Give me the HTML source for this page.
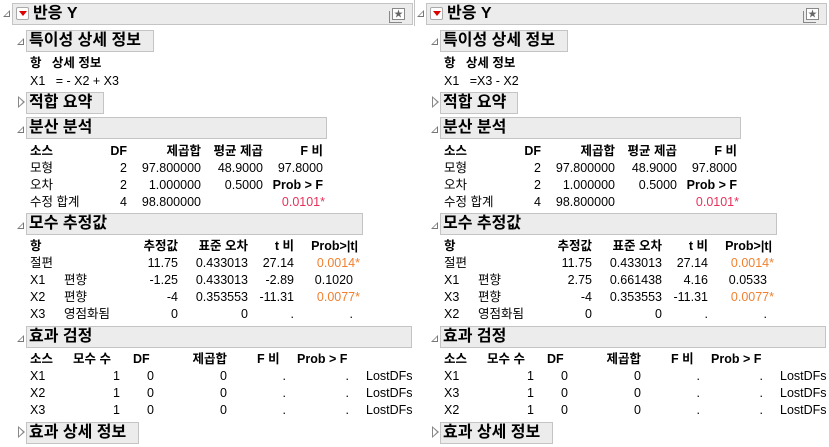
<!DOCTYPE html>
<html><head><meta charset="utf-8"><style>
*{margin:0;padding:0;box-sizing:border-box}
body{width:829px;height:447px;background:#fff;position:relative;overflow:hidden;font-family:"Liberation Sans","Noto Sans CJK KR",sans-serif;font-size:12.5px;color:#000}
.p{position:absolute;top:0;width:415px;height:447px}
.a{position:absolute;white-space:nowrap;line-height:16px}
.r{text-align:right}
.b{font-weight:bold}
.box{position:absolute;background:#ececec;border:1px solid #c4c4c4;font-weight:bold;font-size:16px;line-height:19px;padding-left:2px}
.tri{position:absolute;width:0;height:0}
.dn{border-left:7px solid transparent;border-bottom:7px solid #777}
.dn:after{content:"";position:absolute;left:-5px;top:2px;border-left:4px solid transparent;border-bottom:4px solid #fff}
.rt{border-top:6px solid transparent;border-bottom:6px solid transparent;border-left:7px solid #888}
.rt:after{content:"";position:absolute;left:-6px;top:-4px;border-top:4px solid transparent;border-bottom:4px solid transparent;border-left:4px solid #fff}
.red{color:#e8305a}.or{color:#f08030}
</style></head><body>

<div class="p" style="left:0">
<div class="tri dn" style="left:3px;top:10px"></div>
<div class="box" style="left:12px;top:3px;width:401px;height:22px;padding-left:20px">반응 Y</div>
<div style="position:absolute;left:16px;top:7px;width:13px;height:13px;border:1px solid #aaa;border-radius:2px;background:#fff"><div style="position:absolute;left:2px;top:3px;border-left:4px solid transparent;border-right:4px solid transparent;border-top:5px solid #d00"></div></div>
<div style="position:absolute;left:392px;top:8px;width:13px;height:12px;border:1px solid #888;background:#fff;font-size:9px;line-height:10px;text-align:center;color:#666">★</div>
<div style="position:absolute;left:389px;top:11px;width:13px;height:12px;border-left:1px solid #888;border-bottom:1px solid #888"></div>

<div class="tri dn" style="left:17px;top:38px"></div>
<div class="box" style="left:26px;top:30px;width:128px;height:22px">특이성 상세 정보</div>
<div class="a b" style="left:30px;top:55px">항&nbsp;&nbsp;&nbsp;상세 정보</div>
<div class="a" style="left:30px;top:73px">X1&nbsp;&nbsp;&nbsp;= - X2 + X3</div>

<div class="tri rt" style="left:18px;top:96px"></div>
<div class="box" style="left:26px;top:92px;width:78px;height:22px">적합 요약</div>

<div class="tri dn" style="left:17px;top:126px"></div>
<div class="box" style="left:26px;top:117px;width:301px;height:22px">분산 분석</div>
<div class="a b" style="left:30px;top:143px">소스</div>
<div class="a b r" style="left:77px;width:50px;top:143px">DF</div>
<div class="a b r" style="left:131px;width:70px;top:143px">제곱합</div>
<div class="a b r" style="left:193px;width:70px;top:143px">평균 제곱</div>
<div class="a b r" style="left:253px;width:70px;top:143px">F 비</div>
<div class="a" style="left:30px;top:160px">모형</div><div class="a r" style="left:77px;width:50px;top:160px">2</div><div class="a r" style="left:131px;width:70px;top:160px">97.800000</div><div class="a r" style="left:193px;width:70px;top:160px">48.9000</div><div class="a r" style="left:253px;width:70px;top:160px">97.8000</div>
<div class="a" style="left:30px;top:177px">오차</div><div class="a r" style="left:77px;width:50px;top:177px">2</div><div class="a r" style="left:131px;width:70px;top:177px">1.000000</div><div class="a r" style="left:193px;width:70px;top:177px">0.5000</div><div class="a r b" style="left:253px;width:70px;top:177px">Prob &gt; F</div>
<div class="a" style="left:30px;top:194px">수정 합계</div><div class="a r" style="left:77px;width:50px;top:194px">4</div><div class="a r" style="left:131px;width:70px;top:194px">98.800000</div><div class="a r red" style="left:253px;width:72px;top:194px">0.0101*</div>

<div class="tri dn" style="left:17px;top:222px"></div>
<div class="box" style="left:26px;top:213px;width:337px;height:22px">모수 추정값</div>
<div class="a b" style="left:30px;top:238px">항</div>
<div class="a b r" style="left:108px;width:70px;top:238px">추정값</div>
<div class="a b r" style="left:168px;width:80px;top:238px">표준 오차</div>
<div class="a b r" style="left:234px;width:60px;top:238px">t 비</div>
<div class="a b r" style="left:288px;width:70px;top:238px">Prob&gt;|t|</div>
<div class="a" style="left:30px;top:255px">절편</div><div class="a r" style="left:108px;width:70px;top:255px">11.75</div><div class="a r" style="left:168px;width:80px;top:255px">0.433013</div><div class="a r" style="left:234px;width:60px;top:255px">27.14</div><div class="a r or" style="left:288px;width:72px;top:255px">0.0014*</div>
<div class="a" style="left:30px;top:272px">X1</div><div class="a" style="left:64px;top:272px">편향</div><div class="a r" style="left:108px;width:70px;top:272px">-1.25</div><div class="a r" style="left:168px;width:80px;top:272px">0.433013</div><div class="a r" style="left:234px;width:60px;top:272px">-2.89</div><div class="a r" style="left:283px;width:70px;top:272px">0.1020</div>
<div class="a" style="left:30px;top:289px">X2</div><div class="a" style="left:64px;top:289px">편향</div><div class="a r" style="left:108px;width:70px;top:289px">-4</div><div class="a r" style="left:168px;width:80px;top:289px">0.353553</div><div class="a r" style="left:234px;width:60px;top:289px">-11.31</div><div class="a r or" style="left:288px;width:72px;top:289px">0.0077*</div>
<div class="a" style="left:30px;top:306px">X3</div><div class="a" style="left:64px;top:306px">영점화됨</div><div class="a r" style="left:108px;width:70px;top:306px">0</div><div class="a r" style="left:168px;width:80px;top:306px">0</div><div class="a r" style="left:234px;width:60px;top:306px">.</div><div class="a r" style="left:283px;width:70px;top:306px">.</div>

<div class="tri dn" style="left:17px;top:335px"></div>
<div class="box" style="left:26px;top:326px;width:386px;height:22px">효과 검정</div>
<div class="a b" style="left:30px;top:351px">소스</div><div class="a b" style="left:73px;top:351px">모수 수</div><div class="a b" style="left:133px;top:351px">DF</div><div class="a b r" style="left:157px;width:70px;top:351px">제곱합</div><div class="a b" style="left:257px;top:351px">F 비</div><div class="a b" style="left:297px;top:351px">Prob &gt; F</div>
<div class="a" style="left:30px;top:368px">X1</div><div class="a r" style="left:70px;width:50px;top:368px">1</div><div class="a r" style="left:134px;width:20px;top:368px">0</div><div class="a r" style="left:157px;width:70px;top:368px">0</div><div class="a r" style="left:256px;width:30px;top:368px">.</div><div class="a r" style="left:319px;width:30px;top:368px">.</div><div class="a" style="left:366px;top:368px">LostDFs</div>
<div class="a" style="left:30px;top:385px">X2</div><div class="a r" style="left:70px;width:50px;top:385px">1</div><div class="a r" style="left:134px;width:20px;top:385px">0</div><div class="a r" style="left:157px;width:70px;top:385px">0</div><div class="a r" style="left:256px;width:30px;top:385px">.</div><div class="a r" style="left:319px;width:30px;top:385px">.</div><div class="a" style="left:366px;top:385px">LostDFs</div>
<div class="a" style="left:30px;top:402px">X3</div><div class="a r" style="left:70px;width:50px;top:402px">1</div><div class="a r" style="left:134px;width:20px;top:402px">0</div><div class="a r" style="left:157px;width:70px;top:402px">0</div><div class="a r" style="left:256px;width:30px;top:402px">.</div><div class="a r" style="left:319px;width:30px;top:402px">.</div><div class="a" style="left:366px;top:402px">LostDFs</div>

<div class="tri rt" style="left:18px;top:426px"></div>
<div class="box" style="left:26px;top:422px;width:113px;height:22px">효과 상세 정보</div>
</div>

<div style="position:absolute;left:414px;top:0;width:1px;height:26px;background:#c4c4c4"></div>

<div class="p" style="left:414px">
<div class="tri dn" style="left:3px;top:10px"></div>
<div class="box" style="left:12px;top:3px;width:401px;height:22px;padding-left:20px">반응 Y</div>
<div style="position:absolute;left:16px;top:7px;width:13px;height:13px;border:1px solid #aaa;border-radius:2px;background:#fff"><div style="position:absolute;left:2px;top:3px;border-left:4px solid transparent;border-right:4px solid transparent;border-top:5px solid #d00"></div></div>
<div style="position:absolute;left:392px;top:8px;width:13px;height:12px;border:1px solid #888;background:#fff;font-size:9px;line-height:10px;text-align:center;color:#666">★</div>
<div style="position:absolute;left:389px;top:11px;width:13px;height:12px;border-left:1px solid #888;border-bottom:1px solid #888"></div>

<div class="tri dn" style="left:17px;top:38px"></div>
<div class="box" style="left:26px;top:30px;width:128px;height:22px">특이성 상세 정보</div>
<div class="a b" style="left:30px;top:55px">항&nbsp;&nbsp;&nbsp;상세 정보</div>
<div class="a" style="left:30px;top:73px">X1&nbsp;&nbsp;&nbsp;=X3 - X2</div>

<div class="tri rt" style="left:18px;top:96px"></div>
<div class="box" style="left:26px;top:92px;width:78px;height:22px">적합 요약</div>

<div class="tri dn" style="left:17px;top:126px"></div>
<div class="box" style="left:26px;top:117px;width:301px;height:22px">분산 분석</div>
<div class="a b" style="left:30px;top:143px">소스</div>
<div class="a b r" style="left:77px;width:50px;top:143px">DF</div>
<div class="a b r" style="left:131px;width:70px;top:143px">제곱합</div>
<div class="a b r" style="left:193px;width:70px;top:143px">평균 제곱</div>
<div class="a b r" style="left:253px;width:70px;top:143px">F 비</div>
<div class="a" style="left:30px;top:160px">모형</div><div class="a r" style="left:77px;width:50px;top:160px">2</div><div class="a r" style="left:131px;width:70px;top:160px">97.800000</div><div class="a r" style="left:193px;width:70px;top:160px">48.9000</div><div class="a r" style="left:253px;width:70px;top:160px">97.8000</div>
<div class="a" style="left:30px;top:177px">오차</div><div class="a r" style="left:77px;width:50px;top:177px">2</div><div class="a r" style="left:131px;width:70px;top:177px">1.000000</div><div class="a r" style="left:193px;width:70px;top:177px">0.5000</div><div class="a r b" style="left:253px;width:70px;top:177px">Prob &gt; F</div>
<div class="a" style="left:30px;top:194px">수정 합계</div><div class="a r" style="left:77px;width:50px;top:194px">4</div><div class="a r" style="left:131px;width:70px;top:194px">98.800000</div><div class="a r red" style="left:253px;width:72px;top:194px">0.0101*</div>

<div class="tri dn" style="left:17px;top:222px"></div>
<div class="box" style="left:26px;top:213px;width:337px;height:22px">모수 추정값</div>
<div class="a b" style="left:30px;top:238px">항</div>
<div class="a b r" style="left:108px;width:70px;top:238px">추정값</div>
<div class="a b r" style="left:168px;width:80px;top:238px">표준 오차</div>
<div class="a b r" style="left:234px;width:60px;top:238px">t 비</div>
<div class="a b r" style="left:288px;width:70px;top:238px">Prob&gt;|t|</div>
<div class="a" style="left:30px;top:255px">절편</div><div class="a r" style="left:108px;width:70px;top:255px">11.75</div><div class="a r" style="left:168px;width:80px;top:255px">0.433013</div><div class="a r" style="left:234px;width:60px;top:255px">27.14</div><div class="a r or" style="left:288px;width:72px;top:255px">0.0014*</div>
<div class="a" style="left:30px;top:272px">X1</div><div class="a" style="left:64px;top:272px">편향</div><div class="a r" style="left:108px;width:70px;top:272px">2.75</div><div class="a r" style="left:168px;width:80px;top:272px">0.661438</div><div class="a r" style="left:234px;width:60px;top:272px">4.16</div><div class="a r" style="left:283px;width:70px;top:272px">0.0533</div>
<div class="a" style="left:30px;top:289px">X3</div><div class="a" style="left:64px;top:289px">편향</div><div class="a r" style="left:108px;width:70px;top:289px">-4</div><div class="a r" style="left:168px;width:80px;top:289px">0.353553</div><div class="a r" style="left:234px;width:60px;top:289px">-11.31</div><div class="a r or" style="left:288px;width:72px;top:289px">0.0077*</div>
<div class="a" style="left:30px;top:306px">X2</div><div class="a" style="left:64px;top:306px">영점화됨</div><div class="a r" style="left:108px;width:70px;top:306px">0</div><div class="a r" style="left:168px;width:80px;top:306px">0</div><div class="a r" style="left:234px;width:60px;top:306px">.</div><div class="a r" style="left:283px;width:70px;top:306px">.</div>

<div class="tri dn" style="left:17px;top:335px"></div>
<div class="box" style="left:26px;top:326px;width:386px;height:22px">효과 검정</div>
<div class="a b" style="left:30px;top:351px">소스</div><div class="a b" style="left:73px;top:351px">모수 수</div><div class="a b" style="left:133px;top:351px">DF</div><div class="a b r" style="left:157px;width:70px;top:351px">제곱합</div><div class="a b" style="left:257px;top:351px">F 비</div><div class="a b" style="left:297px;top:351px">Prob &gt; F</div>
<div class="a" style="left:30px;top:368px">X1</div><div class="a r" style="left:70px;width:50px;top:368px">1</div><div class="a r" style="left:134px;width:20px;top:368px">0</div><div class="a r" style="left:157px;width:70px;top:368px">0</div><div class="a r" style="left:256px;width:30px;top:368px">.</div><div class="a r" style="left:319px;width:30px;top:368px">.</div><div class="a" style="left:366px;top:368px">LostDFs</div>
<div class="a" style="left:30px;top:385px">X3</div><div class="a r" style="left:70px;width:50px;top:385px">1</div><div class="a r" style="left:134px;width:20px;top:385px">0</div><div class="a r" style="left:157px;width:70px;top:385px">0</div><div class="a r" style="left:256px;width:30px;top:385px">.</div><div class="a r" style="left:319px;width:30px;top:385px">.</div><div class="a" style="left:366px;top:385px">LostDFs</div>
<div class="a" style="left:30px;top:402px">X2</div><div class="a r" style="left:70px;width:50px;top:402px">1</div><div class="a r" style="left:134px;width:20px;top:402px">0</div><div class="a r" style="left:157px;width:70px;top:402px">0</div><div class="a r" style="left:256px;width:30px;top:402px">.</div><div class="a r" style="left:319px;width:30px;top:402px">.</div><div class="a" style="left:366px;top:402px">LostDFs</div>

<div class="tri rt" style="left:18px;top:426px"></div>
<div class="box" style="left:26px;top:422px;width:113px;height:22px">효과 상세 정보</div>
</div>
</body></html>
